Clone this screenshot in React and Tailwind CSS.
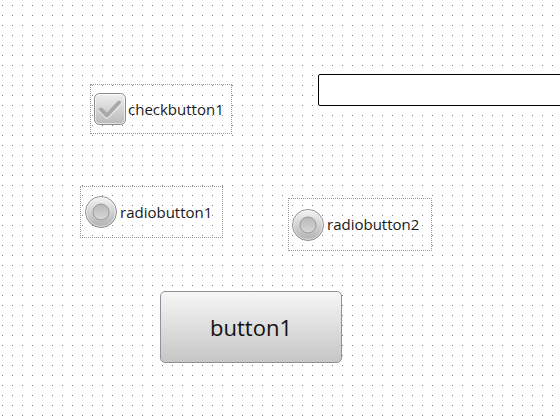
import React from "react";

const font = { fontFamily: "'Open Sans', 'Noto Sans', sans-serif" };

const CheckIcon = () => (
  <svg width="32" height="32" viewBox="0 0 32 32">
    <defs>
      <linearGradient id="cbg" x1="0" y1="0" x2="0" y2="1">
        <stop offset="0" stopColor="#f0f0f0" />
        <stop offset="1" stopColor="#b9b9b9" />
      </linearGradient>
    </defs>
    <rect x="0.5" y="0.5" width="31" height="31" rx="5" fill="url(#cbg)" stroke="#8c8c8c" />
    <rect x="1.5" y="1.5" width="29" height="29" rx="4" fill="none" stroke="#ffffff" strokeOpacity="0.6" />
    <path d="M7 16.5l6 6 12-13" fill="none" stroke="#ffffff" strokeOpacity="0.7" strokeWidth="4.5" strokeLinecap="round" strokeLinejoin="round" transform="translate(0 1)" />
    <path d="M7 16.5l6 6 12-13" fill="none" stroke="#a9a9a9" strokeWidth="4" strokeLinecap="round" strokeLinejoin="round" />
  </svg>
);

const RadioIcon = () => (
  <svg width="32" height="32" viewBox="0 0 32 32">
    <defs>
      <linearGradient id="rbg" x1="0" y1="0" x2="0" y2="1">
        <stop offset="0" stopColor="#f4f4f4" />
        <stop offset="1" stopColor="#b0b0b0" />
      </linearGradient>
      <linearGradient id="rin" x1="0" y1="0" x2="0" y2="1">
        <stop offset="0" stopColor="#b8b8b8" />
        <stop offset="1" stopColor="#d8d8d8" />
      </linearGradient>
    </defs>
    <circle cx="16" cy="16" r="15.5" fill="url(#rbg)" stroke="#8e8e8e" />
    <circle cx="16" cy="16" r="14.5" fill="none" stroke="#ffffff" strokeOpacity="0.5" />
    <circle cx="16" cy="16" r="8" fill="url(#rin)" stroke="#9a9a9a" />
  </svg>
);

export default function App() {
  return (
    <div
      className="relative w-[560px] h-[420px] overflow-hidden bg-white bg-[radial-gradient(circle_at_0.5px_0.5px,#7a7a7a_0.5px,transparent_0.6px)] bg-[length:10px_10px] bg-[position:2px_5px]"
      style={font}
    >
      {/* check button */}
      <div className="absolute left-[90px] top-[84px] w-[142px] h-[50px] border border-dotted border-[#9a9a9a] flex items-center gap-[2px] pl-[3px]">
        <CheckIcon />
        <span className="text-[15px] text-[#1a1a1a] leading-none">checkbutton1</span>
      </div>

      {/* entry */}
      <div className="absolute left-[318px] top-[74px] w-[300px] h-[32px] bg-white border border-black rounded-[2px]" />

      {/* radio 1 */}
      <div className="absolute left-[80px] top-[186px] w-[143px] h-[52px] border border-dotted border-[#9a9a9a] flex items-center gap-[3px] pl-[4px]">
        <RadioIcon />
        <span className="text-[15px] text-[#1a1a1a] leading-none">radiobutton1</span>
      </div>

      {/* radio 2 */}
      <div className="absolute left-[288px] top-[198px] w-[144px] h-[53px] border border-dotted border-[#9a9a9a] flex items-center gap-[3px] pl-[3px]">
        <RadioIcon />
        <span className="text-[15px] text-[#1a1a1a] leading-none">radiobutton2</span>
      </div>

      {/* button */}
      <div className="absolute left-[160px] top-[291px] w-[182px] h-[72px] rounded-[5px] border border-[#8d939a] bg-gradient-to-b from-[#f6f6f6] to-[#c6c6c6] flex items-center justify-center">
        <span className="text-[22px] text-[#111] leading-none">button1</span>
      </div>
    </div>
  );
}
